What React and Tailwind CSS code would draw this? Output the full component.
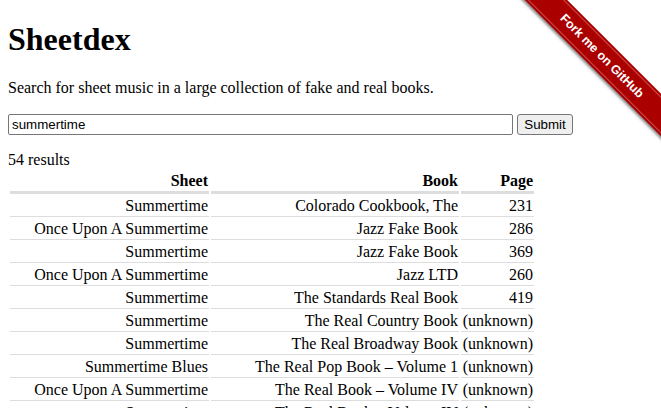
const results = [
  ['Summertime', 'Colorado Cookbook, The', '231'],
  ['Once Upon A Summertime', 'Jazz Fake Book', '286'],
  ['Summertime', 'Jazz Fake Book', '369'],
  ['Once Upon A Summertime', 'Jazz LTD', '260'],
  ['Summertime', 'The Standards Real Book', '419'],
  ['Summertime', 'The Real Country Book', '(unknown)'],
  ['Summertime', 'The Real Broadway Book', '(unknown)'],
  ['Summertime Blues', 'The Real Pop Book – Volume 1', '(unknown)'],
  ['Once Upon A Summertime', 'The Real Book – Volume IV', '(unknown)'],
  ['Summertime', 'The Real Book – Volume IV', '(unknown)'],
];

function Ribbon() {
  return (
    <div className="pointer-events-none absolute right-0 top-0 h-[149px] w-[149px] overflow-hidden">
      <div className="absolute left-[-20px] top-[41px] flex h-[30px] w-[220px] rotate-45 items-center justify-center bg-[#aa0000] shadow-[0_2px_3px_rgba(0,0,0,0.5)]">
        <div className="flex h-[26px] w-full items-center justify-center border-y border-[#d66]/70">
          <span className="font-['Liberation_Sans',Arial,sans-serif] text-[12.5px] font-bold text-white">
            Fork me on GitHub
          </span>
        </div>
      </div>
    </div>
  );
}

export default function App() {
  return (
    <div className="relative min-h-screen overflow-hidden bg-white px-2 pt-[21px] font-['Liberation_Serif','Times_New_Roman',serif] text-base leading-[normal] text-black">
      <Ribbon />
      <h1 className="text-[32px] font-bold leading-[normal]">Sheetdex</h1>
      <p className="mt-[21px]">Search for sheet music in a large collection of fake and real books.</p>
      <form className="mt-4 flex items-start gap-1 pt-[1px]" onSubmit={e => e.preventDefault()}>
        <input
          type="text"
          defaultValue="summertime"
          className="h-[21px] w-[505px] rounded-[2px] border border-[#767676] px-[3px] font-['Liberation_Sans',Arial,sans-serif] text-[13.33px] text-black outline-none"
        />
        <button
          type="submit"
          className="h-[21px] w-[56px] rounded-[3px] border border-[#767676] bg-[#efefef] font-['Liberation_Sans',Arial,sans-serif] text-[13.33px] text-black"
        >
          Submit
        </button>
      </form>
      <div className="mt-4">54 results</div>
      <table className="border-separate border-spacing-[2px] text-right">
        <thead>
          <tr>
            <th className="w-[199px] border-b-[3px] border-[#ddd] p-px font-bold">Sheet</th>
            <th className="w-[248px] border-b-[3px] border-[#ddd] p-px font-bold">Book</th>
            <th className="w-[73px] border-b-[3px] border-[#ddd] p-px font-bold">Page</th>
          </tr>
        </thead>
        <tbody>
          {results.map((row, i) => (
            <tr key={i}>
              <td className="border-b border-[#ddd] p-px">{row[0]}</td>
              <td className="border-b border-[#ddd] p-px">{row[1]}</td>
              <td className="border-b border-[#ddd] p-px">{row[2]}</td>
            </tr>
          ))}
        </tbody>
      </table>
    </div>
  );
}
